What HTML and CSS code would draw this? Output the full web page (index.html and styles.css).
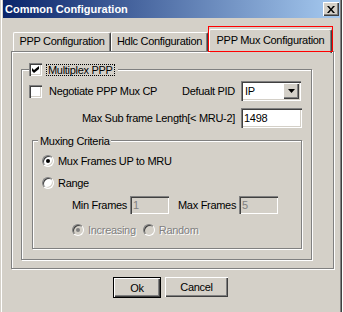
FILE: index.html
```html
<!DOCTYPE html>
<html lang="en">
<head>
  <meta charset="UTF-8" />
  <title>Common Configuration</title>
  <link rel="stylesheet" href="styles.css">
</head>
<body>

  <!-- Dialog window -->
  <div class="window">
    <div class="titlebar">
      <span class="title">Common Configuration</span>
      <span class="close-btn">
        <svg width="8" height="7" viewBox="0 0 8 7"><path d="M0 0h2l2 2.4L6 0h2L5 3.5 8 7H6L4 4.6 2 7H0l3-3.5z" fill="#000"/></svg>
      </span>
    </div>

    <div class="dialog-body">
      <div class="tabctl">
        <div class="tabs">
          <div class="tab tab-ppp">PPP Configuration</div>
          <div class="tab tab-hdlc">Hdlc Configuration</div>
          <div class="tab tab-mux active">PPP Mux Configuration</div>
        </div>

        <div class="panel">
          <!-- Multiplex PPP group -->
          <div class="group group-outer">
            <div class="group-title title-check">
              <span class="check checked">
                <svg width="7" height="7" viewBox="0 0 7 7"><path d="M0 2l2 2 5-4v3L2 7 0 5z" fill="#000"/></svg>
              </span>
              <span class="focus-text">Multiplex PPP</span>
            </div>

            <div class="row row-neg">
              <span class="check"></span>
              <span class="check-label">Negotiate PPP Mux CP</span>
              <span class="pid-label">Defualt PID</span>
              <div class="select">
                <span class="select-val">IP</span>
                <span class="select-btn">
                  <svg width="7" height="4" viewBox="0 0 7 4"><path d="M0 0h7L3.5 4z" fill="#000"/></svg>
                </span>
              </div>
            </div>

            <div class="row row-max">
              <span>Max Sub frame Length[&lt; MRU-2]</span>
              <div class="textbox tb-max">1498</div>
            </div>

            <!-- Muxing Criteria group -->
            <div class="group group-inner">
              <div class="group-title title-text">Muxing Criteria</div>

              <div class="row radio-row first">
                <span class="radio on"></span>
                <span class="radio-label">Mux Frames UP to MRU</span>
              </div>
              <div class="row radio-row">
                <span class="radio"></span>
                <span class="radio-label">Range</span>
              </div>

              <div class="row frames-row">
                <span class="frames-label">Min Frames</span>
                <div class="textbox tb-small disabled">1</div>
                <span class="frames-label max-label">Max Frames</span>
                <div class="textbox tb-small disabled">5</div>
              </div>

              <div class="row order-row">
                <span class="radio on disabled"></span>
                <span class="radio-label disabled-text">Increasing</span>
                <span class="radio disabled random-radio"></span>
                <span class="radio-label disabled-text">Random</span>
              </div>
            </div>
          </div>
        </div>
      </div>

      <div class="buttons">
        <button class="btn btn-default">Ok</button>
        <button class="btn btn-cancel">Cancel</button>
      </div>
    </div>
  </div>

</body>
</html>
```

FILE: styles.css
```css
* {
  margin: 0;
  padding: 0;
  box-sizing: border-box;
}

body {
  background: #fff;
  font-family: "Liberation Sans", Arial, sans-serif;
  font-size: 11px;
  letter-spacing: -0.3px;
  color: #000;
}

/* ========== Window frame ========== */
.window {
  width: 342px;
  height: 312px;
  background: #d4d0c8;
  padding: 0 2px 0 3px;
  overflow: hidden;
  box-shadow: inset 1px 0 #d4d0c8, inset 2px 0 #fff, inset -1px 0 #404040, inset -2px 0 #808080;
}

.titlebar {
  height: 18px;
  display: flex;
  align-items: center;
  padding: 0 1px 0 2px;
  background: linear-gradient(to right, #0a246a, #a6caf0);
}

.title {
  color: #fff;
  font-weight: bold;
  font-size: 11px;
  letter-spacing: 0;
}

.close-btn {
  margin-left: auto;
  width: 16px;
  height: 14px;
  display: flex;
  align-items: center;
  justify-content: center;
  background: #d4d0c8;
  box-shadow: inset 1px 1px #fff, inset -1px -1px #404040, inset -2px -2px #808080;
}

.dialog-body {
  padding-left: 8px;
}

/* ========== Tabs ========== */
.tabctl {
  width: 323px;
}

.tabs {
  height: 33px;
  display: flex;
  align-items: flex-end;
  padding-left: 2px;
  position: relative;
  z-index: 1;
}

.tab {
  height: 19px;
  line-height: 17px;
  text-align: center;
  border: 1px solid #fff;
  border-bottom: none;
  border-right-color: #404040;
  border-radius: 2px 2px 0 0;
  box-shadow: inset -1px 0 #808080;
  white-space: nowrap;
}

.tab-ppp {
  width: 98px;
}

.tab-hdlc {
  width: 97px;
}

.tab-mux {
  width: 123px;
  margin-left: 1px;
}

.tab.active {
  position: relative;
  height: 24px;
  line-height: 20px;
  margin-bottom: -2px;
  background: #d4d0c8;
}

/* red highlight drawn round the current tab */
.tab.active::after {
  content: "";
  position: absolute;
  left: -2px;
  top: -4px;
  right: -2px;
  bottom: 1px;
  border: 1px solid #f00;
}

.panel {
  height: 218px;
  padding-left: 9px;
  border: 1px solid #808080;
  box-shadow: inset 1px 1px #fff, 1px 1px #fff;
}

/* ========== Group boxes ========== */
.group {
  position: relative;
  border: 1px solid #808080;
  box-shadow: inset 1px 1px #fff, 1px 1px #fff;
}

.group-title {
  position: absolute;
  top: -7px;
  height: 13px;
  display: flex;
  align-items: center;
  background: #d4d0c8;
  white-space: nowrap;
}

.group-outer {
  width: 291px;
  margin-top: 17px;
  padding-bottom: 10px;
}

.title-check {
  left: 7px;
  padding-right: 3px;
}

.focus-text {
  margin-left: 4px;
  padding: 0 1px;
  line-height: 10px;
  border: 1px dotted #000;
}

.group-inner {
  width: 270px;
  margin: 12px 0 0 10px;
  padding-bottom: 12px;
}

.title-text {
  left: 5px;
  padding: 0 2px;
}

.row {
  display: flex;
  align-items: center;
  white-space: nowrap;
}

.row-neg {
  height: 20px;
  margin-top: 11px;
  padding: 0 10px 0 7px;
}

.check-label {
  margin-left: 7px;
}

.pid-label {
  margin-left: auto;
  margin-right: 6px;
}

.row-max {
  height: 20px;
  margin-top: 7px;
  padding-right: 9px;
  justify-content: flex-end;
  gap: 6px;
}

.radio-row {
  height: 13px;
  margin-top: 9px;
  padding-left: 9px;
}

.radio-row.first {
  margin-top: 13px;
}

.radio-label {
  margin-left: 4px;
}

.frames-row {
  height: 18px;
  margin-top: 7px;
  padding-left: 39px;
}

.frames-label {
  flex: none;
  width: 54px;
}

.max-label {
  margin-left: 9px;
  width: 57px;
}

.frames-row .textbox {
  flex: none;
  margin-left: 4px;
}

.order-row {
  height: 13px;
  margin-top: 9px;
  padding-left: 39px;
}

.random-radio {
  margin-left: 7px;
}

/* ========== Controls ========== */
.check {
  width: 13px;
  height: 13px;
  flex: none;
  display: flex;
  align-items: center;
  justify-content: center;
  background: #fff;
  box-shadow: inset 1px 1px #808080, inset 2px 2px #404040, inset -1px -1px #fff, inset -2px -2px #d4d0c8;
}

.radio {
  position: relative;
  width: 12px;
  height: 12px;
  flex: none;
  border-radius: 50%;
  background: #fff;
  border: 1px solid;
  border-color: #808080 #fff #fff #808080;
  box-shadow: inset 1px 1px #404040, inset -1px -1px #d4d0c8;
}

.radio.on::after {
  content: "";
  position: absolute;
  left: 3px;
  top: 3px;
  width: 4px;
  height: 4px;
  border-radius: 50%;
  background: #000;
}

.radio.disabled {
  background: #d4d0c8;
}

.radio.disabled.on::after {
  background: #808080;
}

.disabled-text {
  color: #808080;
  text-shadow: 1px 1px #fff;
}

.select {
  width: 60px;
  height: 20px;
  flex: none;
  display: flex;
  align-items: center;
  padding: 2px;
  background: #fff;
  box-shadow: inset 1px 1px #808080, inset 2px 2px #404040, inset -1px -1px #fff, inset -2px -2px #d4d0c8;
}

.select-val {
  flex: 1;
  padding-left: 2px;
}

.select-btn {
  width: 16px;
  height: 16px;
  display: flex;
  align-items: center;
  justify-content: center;
  background: #d4d0c8;
  box-shadow: inset 1px 1px #fff, inset -1px -1px #404040, inset -2px -2px #808080;
}

.textbox {
  height: 20px;
  line-height: 20px;
  padding-left: 3px;
  background: #fff;
  box-shadow: inset 1px 1px #808080, inset 2px 2px #404040, inset -1px -1px #fff, inset -2px -2px #d4d0c8;
}

.tb-max {
  flex: none;
  width: 61px;
}

.tb-small {
  width: 39px;
  height: 18px;
  line-height: 18px;
}

.textbox.disabled {
  background: #d4d0c8;
  color: #808080;
}

/* ========== Buttons ========== */
.buttons {
  display: flex;
  align-items: flex-start;
  gap: 4px;
  margin: 8px 0 0 102px;
}

.btn {
  font-family: "Liberation Sans", Arial, sans-serif;
  font-size: 11px;
  letter-spacing: -0.3px;
  color: #000;
  background: #d4d0c8;
  border: none;
  box-shadow: inset 1px 1px #fff, inset -1px -1px #404040, inset -2px -2px #808080;
}

.btn-default {
  width: 48px;
  height: 21px;
  border: 1px solid #000;
}

.btn-cancel {
  width: 63px;
  height: 20px;
}
```
